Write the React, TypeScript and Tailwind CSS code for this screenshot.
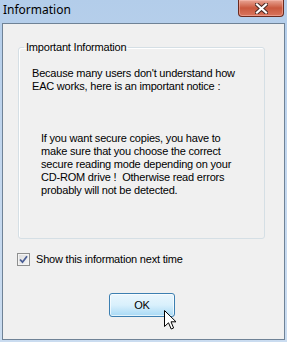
import React from "react";

function CloseButton() {
  return (
    <div className="absolute left-[238px] top-0 h-[17px] w-[46px] rounded-b-[4px] border border-t-0 border-[#6b2a1e] bg-gradient-to-b from-[#e8a595] via-[#c9583e] to-[#d9755d] shadow-[inset_0_0_0_1px_rgba(255,200,190,0.45)] flex items-center justify-center">
      <svg width="13" height="11" viewBox="0 0 13 11">
        <path
          d="M2 1.5 L11 9.5 M11 1.5 L2 9.5"
          stroke="#4a2a24"
          strokeWidth="4.2"
          strokeLinecap="square"
        />
        <path
          d="M2 1.5 L11 9.5 M11 1.5 L2 9.5"
          stroke="#ffffff"
          strokeWidth="2.2"
          strokeLinecap="square"
        />
      </svg>
    </div>
  );
}

function Cursor() {
  return (
    <svg
      className="absolute left-[164px] top-[310px]"
      width="13"
      height="21"
      viewBox="0 0 13 21"
    >
      <path
        d="M0.5 0.5 L0.5 16.5 L4.5 12.8 L7.2 19 L9.6 18 L7 11.8 L12 11.8 Z"
        fill="#ffffff"
        stroke="#000000"
        strokeWidth="1"
        strokeLinejoin="miter"
      />
    </svg>
  );
}

export default function App() {
  return (
    <div className="relative w-[287px] h-[342px] flex flex-col px-[2px] pb-[2px] bg-gradient-to-b from-[#b3cdea] via-[#c3d7ee] to-[#cadcf0] font-['Liberation_Sans',Arial,sans-serif] text-[11px] leading-[13px] tracking-[-0.2px] text-black overflow-hidden">
      <div className="h-[23px] flex items-start">
        <span className="pl-[1px] pt-[2px] text-[12px] leading-[16px] tracking-normal font-['Noto_Sans','Open_Sans',sans-serif] text-black">
          Information
        </span>
      </div>
      <CloseButton />

      <div className="flex-1 flex flex-col bg-[#f0f0f0] border border-[#6f8296]">
        <fieldset className="ml-[15px] mt-[17px] w-[247px] rounded-[3px] border border-[#d5dfe5] shadow-[inset_1px_1px_0_#ffffff] px-[13px] pb-[41px]">
          <legend className="ml-[-8px] px-[2px]">Important Information</legend>
          <p className="mt-[13px]">
            Because many users don't understand how
            <br />
            EAC works, here is an important notice :
          </p>
          <p className="mt-[39px] pl-[9px] whitespace-pre">
            {"If you want secure copies, you have to\nmake sure that you choose the correct\nsecure reading mode depending on your\nCD-ROM drive !  Otherwise read errors\nprobably will not be detected."}
          </p>
        </fieldset>

        <label className="ml-[14px] mt-[14px] flex items-center gap-[6px]">
          <span className="w-[13px] h-[13px] border border-[#8e8f8f] bg-gradient-to-br from-[#dcdcdc] to-[#f6f6f6] shadow-[inset_0_0_0_1px_#f4f4f4] flex items-center justify-center">
            <svg width="9" height="9" viewBox="0 0 9 9">
              <path
                d="M1 4.5 L3.5 7.2 L8 1.2"
                fill="none"
                stroke="#4a5e95"
                strokeWidth="1.8"
              />
            </svg>
          </span>
          <span>Show this information next time</span>
        </label>

        <div className="ml-[106px] mt-[27px] w-[66px] h-[24px] rounded-[3px] border border-[#3c7fb1] bg-gradient-to-b from-[#eaf6fd] via-[#d9f0fc] to-[#a7d9f5] shadow-[inset_0_0_0_1px_#ffffffaa] flex items-center justify-center">
          OK
        </div>
      </div>

      <Cursor />
    </div>
  );
}
